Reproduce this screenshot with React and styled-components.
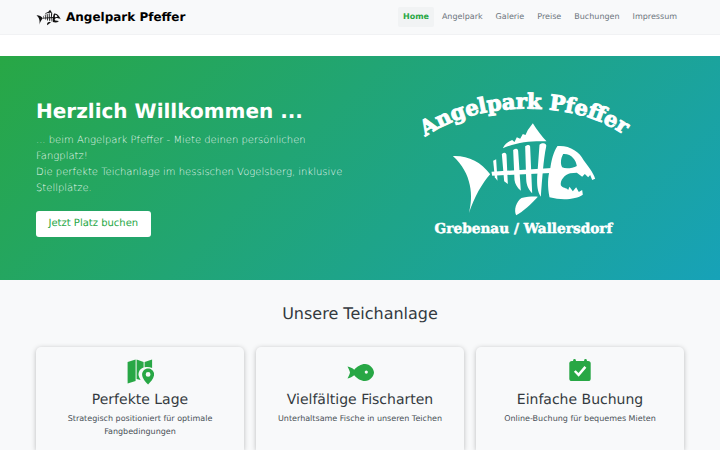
import React from 'react';
import styled, { createGlobalStyle } from 'styled-components';

const GlobalStyle = createGlobalStyle`
  html, body {
    margin: 0;
    height: 450px;
    overflow: hidden;
    background: #fff;
    font-family: "DejaVu Sans", sans-serif;
    text-rendering: geometricPrecision;
  }
`;

const Navbar = styled.nav`
  height: 34px;
  padding: 0 38px 0 36px;
  display: flex;
  align-items: center;
  justify-content: space-between;
  background: #f8f9fa;
  border-bottom: 1px solid #f1f2f4;
`;

const Brand = styled.a`
  display: flex;
  align-items: center;
  gap: 5px;
  font-size: 12px;
  font-weight: 700;
  color: #000;
`;

const NavLinks = styled.div`
  display: flex;
  align-items: center;
  gap: 3px;
`;

const NavLink = styled.a`
  padding: 0 5px;
  height: 20px;
  line-height: 20px;
  font-size: 8px;
  border-radius: 2px;
  color: ${(p) => (p.$active ? '#28a745' : '#6c757d')};
  font-weight: ${(p) => (p.$active ? 700 : 400)};
  background: ${(p) => (p.$active ? '#f1f3f4' : 'transparent')};
`;

const Hero = styled.section`
  margin-top: 21px;
  height: 224px;
  padding: 0 36px 2px;
  box-sizing: border-box;
  display: flex;
  align-items: center;
  background: linear-gradient(135deg, #28a745 0%, #17a2b8 100%);
`;

const HeroText = styled.div`
  width: 324px;
  color: #fff;
`;

const HeroTitle = styled.h1`
  margin: 0 0 9px;
  font-size: 20px;
  line-height: 26px;
  font-weight: 700;
`;

const HeroLead = styled.p`
  margin: 0 0 14px;
  font-size: 10px;
  line-height: 16px;
  font-weight: 300;
  color: rgba(255, 255, 255, 0.92);
`;

const BookButton = styled.a`
  display: inline-block;
  height: 26px;
  line-height: 26px;
  padding: 0 12.5px;
  border-radius: 3px;
  background: #fff;
  color: #28a745;
  font-size: 10px;
`;

const HeroLogo = styled.div`
  flex: 1;
  display: flex;
  justify-content: center;
`;

const Features = styled.section`
  padding: 23px 36px 0;
  background: #f8f9fa;
  height: 147px;
`;

const SectionTitle = styled.h2`
  margin: 0 0 23px;
  text-align: center;
  font-size: 16px;
  line-height: 21px;
  font-weight: 400;
  color: #343a40;
`;

const CardGrid = styled.div`
  display: grid;
  grid-template-columns: repeat(3, 1fr);
  gap: 12px;
`;

const Card = styled.article`
  height: 103px;
  padding: 12px 14px;
  box-sizing: border-box;
  display: flex;
  flex-direction: column;
  align-items: center;
  text-align: center;
  background: #f8f9fa;
  border-radius: 5px 5px 0 0;
  box-shadow: 0 1px 5px rgba(0, 0, 0, 0.25);
`;

const IconSlot = styled.div`
  height: 26px;
  display: flex;
  align-items: center;
  justify-content: center;
`;

const CardTitle = styled.h3`
  margin: 6px 0 2px;
  font-size: 14px;
  line-height: 19px;
  font-weight: 400;
  color: #343a40;
`;

const CardText = styled.p`
  margin: 0;
  font-size: 8px;
  line-height: 13px;
  color: #495057;
`;

const FishShape = () => (
  <>
    <path d="M160 228C205 226 245 245 272 283C248 310 225 350 208 400C222 350 218 280 160 228Z" />
    <path d="M310 205C316 190 328 184 338 180L345 186L352 172L362 176L370 162L378 165L385 150L400 130C412 150 428 170 441 184C400 182 350 186 310 205Z" />
    <path d="M276 275L470 263V278L278 287Z" />
    <path d="M281 242L290 238L294 302L286 292Z" />
    <path d="M307 222C314 216 321 218 321 226L325 312L314 304Z" />
    <path d="M341 210C350 204 356 206 356 214L364 332C352 322 347 312 345 300Z" />
    <path d="M377 199C386 192 393 194 392 202L398 340C388 330 381 318 380 298Z" />
    <path d="M420 194C430 186 443 190 440 200C432 235 428 300 424 350C414 335 412 315 413 290Z" />
    <path
      fillRule="evenodd"
      d="M474 198C510 195 540 215 552 240C565 258 580 275 587 296L578 300L572 285L566 292L556 282L548 290L532 278L512 280C495 285 482 300 484 316C490 326 500 322 506 330L510 320L520 334L530 322L538 336L548 330L550 344C530 358 490 362 450 352C444 320 444 290 452 268C456 240 462 215 474 198ZM491 222C484 235 482 250 488 262C500 268 520 264 532 258C530 240 515 220 491 222Z"
    />
    <path d="M415 350C395 372 370 395 350 406C342 390 350 365 366 354C385 350 400 349 415 350Z" />
  </>
);

const FishLogo = () => (
  <svg width="250" height="170" viewBox="-7.5 6 750 510" fill="#fff">
    <FishShape />
    <defs>
      <path id="logo-arc" d="M62 182C160 105 285 86 378 86C485 86 595 105 688 176" />
    </defs>
    <text
      fontFamily='"DejaVu Serif", serif'
      fontWeight="700"
      fontSize="63"
      fill="#fff"
      stroke="#fff"
      strokeWidth="3"
    >
      <textPath href="#logo-arc" startOffset="50%" textAnchor="middle">Angelpark Pfeffer</textPath>
    </text>
    <text
      x="372"
      y="459"
      textAnchor="middle"
      fontFamily='"DejaVu Serif", serif'
      fontWeight="700"
      fontSize="41"
      fill="#fff"
      stroke="#fff"
      strokeWidth="1.5"
    >
      Grebenau / Wallersdorf
    </text>
  </svg>
);

const BrandFish = () => (
  <svg width="25" height="17" viewBox="150 125 445 290" fill="#111">
    <FishShape />
  </svg>
);

const MapPinIcon = () => (
  <svg width="28" height="26" viewBox="-1.6 0 28 26" fill="#28a745">
    <path d="M0 3L8 0.5V22L0 24.5Z" />
    <path d="M9 0.5L16 3V8.5C12.5 9.5 10.5 13 11 16.5C11.4 18 12 19.5 13 21L9 20Z" />
    <path d="M17 3L24.5 0.5V9C22 7.8 19.5 7.7 17 8.3Z" />
    <path
      fillRule="evenodd"
      d="M20.5 9.5C23.8 9.5 26.5 12.2 26.5 15.4C26.5 19 23 23 20.5 25.5C18 23 14.5 19 14.5 15.4C14.5 12.2 17.2 9.5 20.5 9.5ZM20.5 13A2.4 2.4 0 1 0 20.5 17.8A2.4 2.4 0 1 0 20.5 13Z"
    />
  </svg>
);

const FishIcon = () => (
  <svg width="27" height="17" viewBox="0 0 27 17" fill="#28a745">
    <path
      fillRule="evenodd"
      d="M0.5 2.6C3 3 5.5 4.2 7.2 5.8C10 2.5 14 0 18 0C23 0 27 5 27 8.5C27 12 23 17 18 17C14 17 10 14.5 7.2 11.2C5.5 12.8 3 14 0.5 14.4C1.5 12.5 2.6 10.5 3 8.5C2.6 6.5 1.5 4.5 0.5 2.6ZM19.3 6.5A1.6 1.6 0 1 0 19.3 9.7A1.6 1.6 0 1 0 19.3 6.5Z"
    />
  </svg>
);

const CalendarCheckIcon = () => (
  <svg width="22" height="26" viewBox="0 0 22 26" fill="#28a745">
    <rect x="4.2" y="0" width="2.6" height="5" rx="1.2" />
    <rect x="15.2" y="0" width="2.6" height="5" rx="1.2" />
    <rect x="0.3" y="2" width="21.4" height="20" rx="2.6" />
    <path d="M5.8 12L9.6 15.9L16.4 7.9" fill="none" stroke="#fff" strokeWidth="2.5" />
  </svg>
);

const navItems = ['Home', 'Angelpark', 'Galerie', 'Preise', 'Buchungen', 'Impressum'];

const features = [
  {
    title: 'Perfekte Lage',
    text: 'Strategisch positioniert für optimale Fangbedingungen',
    icon: <MapPinIcon />,
  },
  {
    title: 'Vielfältige Fischarten',
    text: 'Unterhaltsame Fische in unseren Teichen',
    icon: <FishIcon />,
  },
  {
    title: 'Einfache Buchung',
    text: 'Online-Buchung für bequemes Mieten',
    icon: <CalendarCheckIcon />,
  },
];

const App = () => (
  <>
    <GlobalStyle />
    <Navbar>
      <Brand>
        <BrandFish />
        Angelpark Pfeffer
      </Brand>
      <NavLinks>
        {navItems.map((item, i) => (
          <NavLink key={item} $active={i === 0}>{item}</NavLink>
        ))}
      </NavLinks>
    </Navbar>
    <Hero>
      <HeroText>
        <HeroTitle>Herzlich Willkommen ...</HeroTitle>
        <HeroLead>
          ... beim Angelpark Pfeffer - Miete deinen persönlichen
          <br />
          Fangplatz!
          <br />
          Die perfekte Teichanlage im hessischen Vogelsberg, inklusive Stellplätze.
        </HeroLead>
        <BookButton>Jetzt Platz buchen</BookButton>
      </HeroText>
      <HeroLogo>
        <FishLogo />
      </HeroLogo>
    </Hero>
    <Features>
      <SectionTitle>Unsere Teichanlage</SectionTitle>
      <CardGrid>
        {features.map((f) => (
          <Card key={f.title}>
            <IconSlot>{f.icon}</IconSlot>
            <CardTitle>{f.title}</CardTitle>
            <CardText>{f.text}</CardText>
          </Card>
        ))}
      </CardGrid>
    </Features>
  </>
);

export default App;
